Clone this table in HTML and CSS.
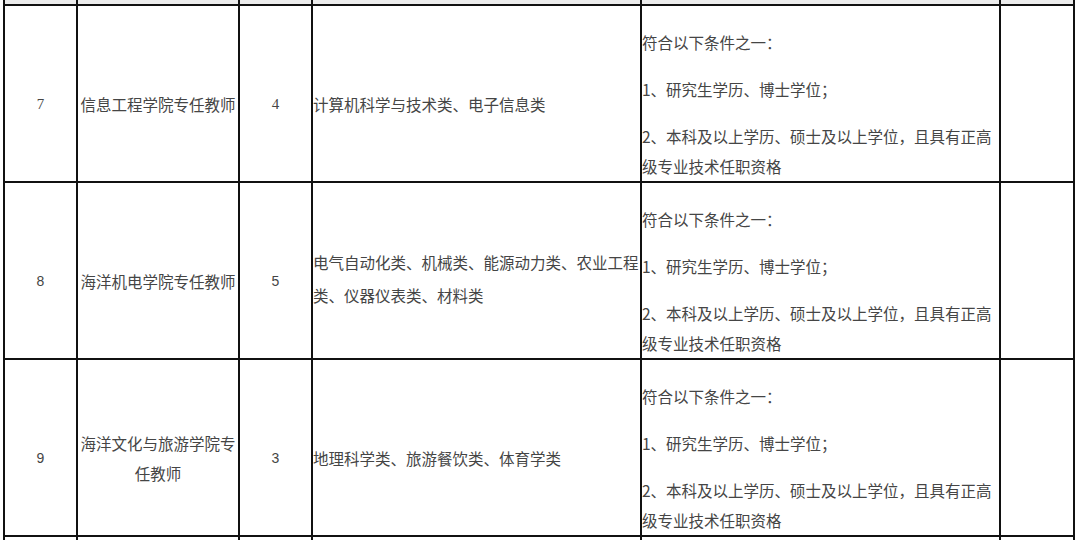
FILE: index.html
```html
<!DOCTYPE html>
<html lang="zh-CN">
<head>
<meta charset="utf-8">
<title>招聘岗位</title>
<link rel="stylesheet" href="styles.css">
</head>
<body>
<table class="jobs">
  <tr class="prev">
    <td class="c1"></td><td class="c2"></td><td class="c3"></td><td class="c4"></td><td class="c5"></td><td class="c6"></td>
  </tr>
  <tr>
    <td class="c1 center num serif"><p>7</p></td>
    <td class="c2 center"><p>信息工程学院专任教师</p></td>
    <td class="c3 center num serif"><p>4</p></td>
    <td class="c4"><p>计算机科学与技术类、电子信息类</p></td>
    <td class="c5 cond">
      <p>符合以下条件之一：</p>
      <p>1、研究生学历、博士学位；</p>
      <p>2、本科及以上学历、硕士及以上学位，且具有正高级专业技术任职资格</p>
    </td>
    <td class="c6"></td>
  </tr>
  <tr>
    <td class="c1 center num"><p>8</p></td>
    <td class="c2 center"><p>海洋机电学院专任教师</p></td>
    <td class="c3 center num"><p>5</p></td>
    <td class="c4 tall"><p>电气自动化类、机械类、能源动力类、农业工程类、仪器仪表类、材料类</p></td>
    <td class="c5 cond">
      <p>符合以下条件之一：</p>
      <p>1、研究生学历、博士学位；</p>
      <p>2、本科及以上学历、硕士及以上学位，且具有正高级专业技术任职资格</p>
    </td>
    <td class="c6"></td>
  </tr>
  <tr>
    <td class="c1 center num"><p>9</p></td>
    <td class="c2 center"><p>海洋文化与旅游学院专任教师</p></td>
    <td class="c3 center num"><p>3</p></td>
    <td class="c4"><p>地理科学类、旅游餐饮类、体育学类</p></td>
    <td class="c5 cond">
      <p>符合以下条件之一：</p>
      <p>1、研究生学历、博士学位；</p>
      <p>2、本科及以上学历、硕士及以上学位，且具有正高级专业技术任职资格</p>
    </td>
    <td class="c6"></td>
  </tr>
  <tr class="next">
    <td class="c1"></td><td class="c2"></td><td class="c3"></td><td class="c4"></td><td class="c5"></td><td class="c6"></td>
  </tr>
</table>
</body>
</html>
```

FILE: styles.css
```css
html, body {
  margin: 0;
  padding: 0;
  background: #ffffff;
  overflow: hidden;
}

.jobs {
  margin-left: 3px;
  border-collapse: separate;
  border-spacing: 0;
  table-layout: fixed;
  font-family: "Noto Sans CJK SC", "Noto Sans", sans-serif;
  font-size: 15.5px;
  color: #454545;
}

.jobs td {
  border-right: 2px solid #111111;
  border-bottom: 2px solid #111111;
  padding: 4px 0 0 0;
  vertical-align: middle;
  text-align: left;
  overflow: hidden;
}

.jobs td.c1 {
  border-left: 2px solid #111111;
}

.c1 { width: 71px; }
.c2 { width: 160px; }
.c3 { width: 71px; }
.c4 { width: 327px; }
.c5 { width: 357px; }
.c6 { width: 72px; }

.jobs p {
  margin: 17px 0 0 0;
  line-height: 30px;
}

.jobs td.center { text-align: center; }

.num {
  font-family: "Liberation Sans", "Noto Sans", sans-serif;
  font-size: 14px;
}

.num.serif {
  font-family: "Liberation Serif", serif;
  font-size: 15px;
}

.tall p {
  line-height: 33px;
}

.jobs .tall {
  padding-top: 0;
}

.prev td {
  height: 4px;
  padding: 0;
  background: #ececec;
}

.next td {
  height: 3px;
  padding: 0;
}
```
